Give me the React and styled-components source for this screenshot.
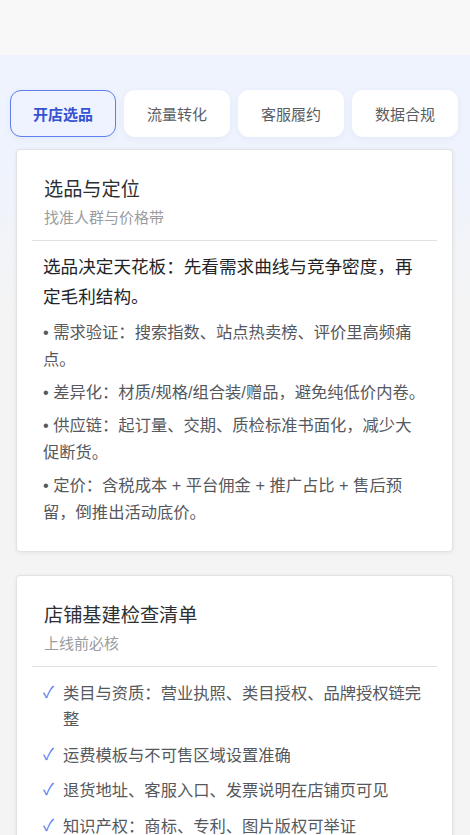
import styled, { createGlobalStyle } from "styled-components";
import { useState } from "react";

const GlobalStyle = createGlobalStyle`
  html, body {
    margin: 0;
    padding: 0;
    background: #f4f4f4;
    font-family: "Liberation Sans", "Noto Sans CJK SC", sans-serif;
  }
`;

const TopBar = styled.div`
  height: 55px;
  background: #f8f8f8;
`;

const Main = styled.div`
  background: linear-gradient(180deg, #eef3fe 0px, #eef3fe 85px, #f4f4f4 260px);
  padding-bottom: 30px;
`;

const TabStrip = styled.div`
  display: flex;
  gap: 8px;
  padding: 35px 0 12px 10px;
  overflow: hidden;
`;

const Tab = styled.button`
  flex: 0 0 106px;
  height: 47px;
  border-radius: 11px;
  border: 1px solid ${(p) => (p.$active ? "#5d7ff0" : "transparent")};
  background: ${(p) => (p.$active ? "#eff3ff" : "#ffffff")};
  color: ${(p) => (p.$active ? "#3552d1" : "#5a5e64")};
  font-family: inherit;
  font-size: 15px;
  font-weight: ${(p) => (p.$active ? 700 : 400)};
  box-shadow: 0 2px 6px rgba(60, 80, 140, 0.06);
  cursor: pointer;
  padding: 0;
`;

const Card = styled.section`
  margin: 0 17px 23px 16px;
  padding: 15px;
  background: #fff;
  border: 1px solid #e2e2e2;
  border-radius: 4px;
  box-shadow: 0 1px 4px rgba(0, 0, 0, 0.07);
`;

const CardHead = styled.header`
  padding: 11px 12px 12px;
  border-bottom: 1px solid #e0e0e0;
`;

const Title = styled.h2`
  margin: 0;
  font-size: 19.2px;
  font-weight: 400;
  line-height: 28px;
  color: #2d2f33;
`;

const Subtitle = styled.div`
  margin-top: 4px;
  font-size: 15px;
  line-height: 20px;
  color: #9a9ca0;
`;

const CardBody = styled.div`
  padding: 11px 12px 10px 11px;
  display: flex;
  flex-direction: column;
  gap: 6px;
`;

const Lead = styled.p`
  margin: 0 0 1px;
  font-size: 17.6px;
  line-height: 30px;
  color: #222428;
`;

const Point = styled.p`
  margin: 0;
  font-size: 16.3px;
  line-height: 27px;
  color: #55585d;
`;

const CheckList = styled.ul`
  list-style: none;
  margin: 2px 0 0;
  padding: 0;
  display: flex;
  flex-direction: column;
  gap: 9.5px;
`;

const CheckItem = styled.li`
  display: flex;
  gap: 9px;
  font-size: 16.3px;
  line-height: 26px;
  color: #55585d;
`;

const Tick = styled.span`
  flex: 0 0 10px;
  color: #5a7cf2;
  font-size: 16px;
`;

const tabs = ["开店选品", "流量转化", "客服履约", "数据合规"];

const points = [
  "• 需求验证：搜索指数、站点热卖榜、评价里高频痛点。",
  "• 差异化：材质/规格/组合装/赠品，避免纯低价内卷。",
  "• 供应链：起订量、交期、质检标准书面化，减少大促断货。",
  "• 定价：含税成本 + 平台佣金 + 推广占比 + 售后预留，倒推出活动底价。",
];

const checks = [
  "类目与资质：营业执照、类目授权、品牌授权链完整",
  "运费模板与不可售区域设置准确",
  "退货地址、客服入口、发票说明在店铺页可见",
  "知识产权：商标、专利、图片版权可举证",
  "主图、详情页、规格参数与实物一致",
  "支付、结算账户与店铺主体信息一致",
  "库存同步与超卖保护规则已开启",
];

const launch = [
  "• 新品期：小预算测款，关注点击率与加购率。",
  "• 评价积累：首批订单重点跟进，及时处理差评。",
  "• 活动节奏：提前报名平台大促，备足库存与客服排班。",
  "• 复盘：每周核对流量来源、转化漏斗与退款原因。",
];

export default function App() {
  const [active, setActive] = useState(0);
  return (
    <>
      <GlobalStyle />
      <TopBar />
      <Main>
        <TabStrip>
          {tabs.map((t, i) => (
            <Tab key={t} $active={i === active} onClick={() => setActive(i)}>
              {t}
            </Tab>
          ))}
        </TabStrip>

        <Card>
          <CardHead>
            <Title>选品与定位</Title>
            <Subtitle>找准人群与价格带</Subtitle>
          </CardHead>
          <CardBody>
            <Lead>选品决定天花板：先看需求曲线与竞争密度，再定毛利结构。</Lead>
            {points.map((p) => (
              <Point key={p}>{p}</Point>
            ))}
          </CardBody>
        </Card>

        <Card>
          <CardHead>
            <Title>店铺基建检查清单</Title>
            <Subtitle>上线前必核</Subtitle>
          </CardHead>
          <CardBody>
            <CheckList>
              {checks.map((c) => (
                <CheckItem key={c}>
                  <Tick>✓</Tick>
                  <span>{c}</span>
                </CheckItem>
              ))}
            </CheckList>
          </CardBody>
        </Card>

        <Card>
          <CardHead>
            <Title>上新与起量</Title>
            <Subtitle>前三十天节奏</Subtitle>
          </CardHead>
          <CardBody>
            <Lead>冷启动靠精准流量：先跑通转化，再放大投放。</Lead>
            {launch.map((p) => (
              <Point key={p}>{p}</Point>
            ))}
          </CardBody>
        </Card>
      </Main>
    </>
  );
}
